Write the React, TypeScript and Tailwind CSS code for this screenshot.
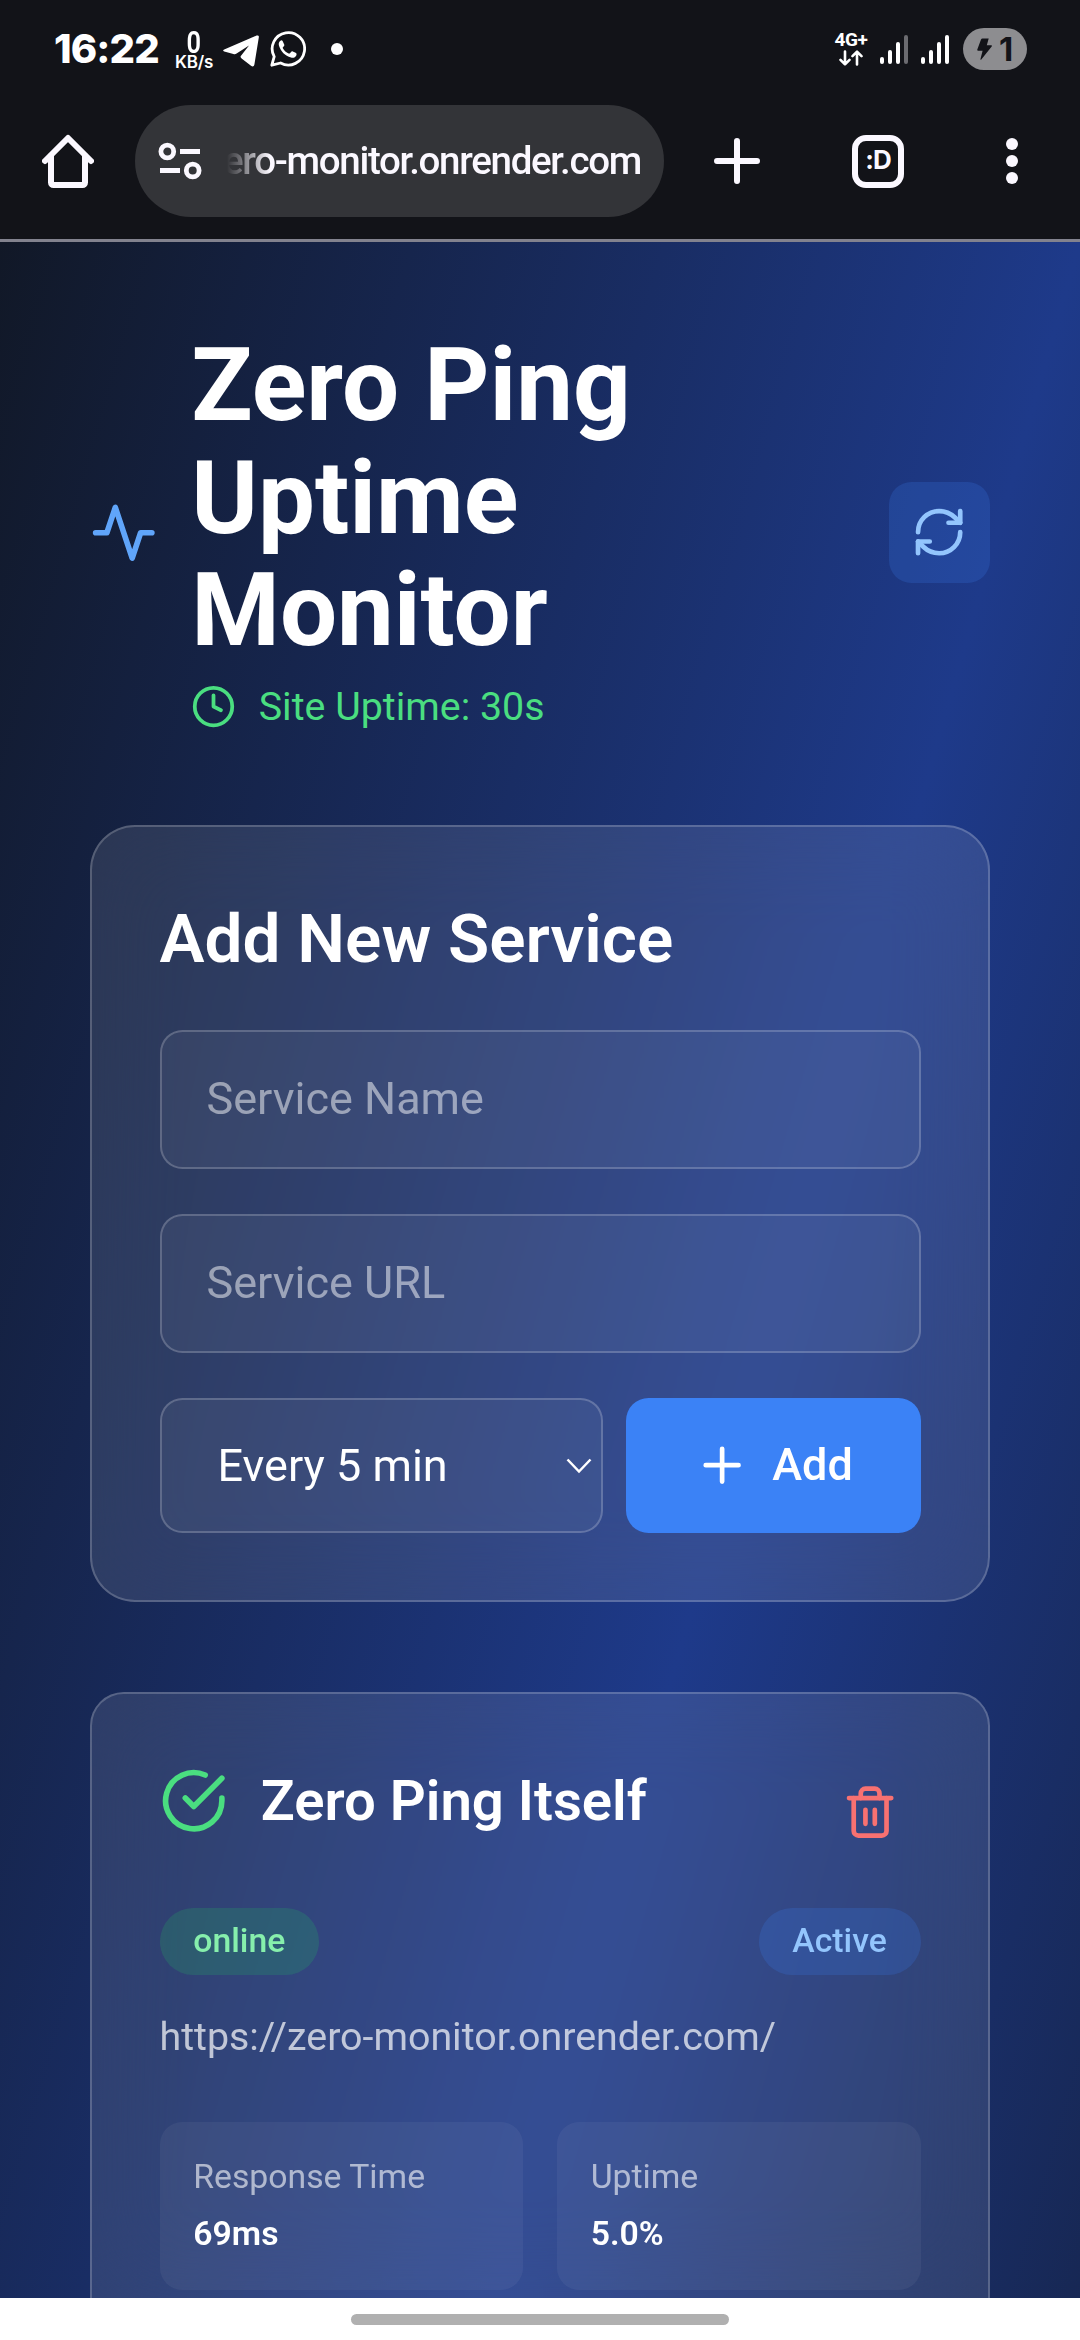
import React from "react";

type IconProps = { className?: string; children: React.ReactNode; strokeWidth?: number };

function Icon({ className = "", children, strokeWidth = 2 }: IconProps) {
  return (
    <svg
      viewBox="0 0 24 24"
      fill="none"
      stroke="currentColor"
      strokeWidth={strokeWidth}
      strokeLinecap="round"
      strokeLinejoin="round"
      className={`shrink-0 ${className}`}
    >
      {children}
    </svg>
  );
}

function SignalBars({ weak = false }: { weak?: boolean }) {
  return (
    <div className="flex h-[29px] items-end gap-[4px]">
      <span className="h-[7px] w-[4px] rounded-full bg-white" />
      <span className="h-[14px] w-[4px] rounded-full bg-white" />
      <span className="h-[22px] w-[4px] rounded-full bg-white" />
      <span className={`h-[29px] w-[4px] rounded-full ${weak ? "bg-[#6b6b70]" : "bg-white"}`} />
    </div>
  );
}

function StatusBar() {
  return (
    <div className="flex h-[98px] items-center justify-between pr-[53px] pl-[54px] text-white">
      <div className="flex items-center">
        <span className="w-[107px] font-['Inter'] text-[40px] leading-[44px] font-extrabold tracking-[-0.9px] whitespace-nowrap">
          16:22
        </span>
        <div className="ml-[13px] flex w-[40px] flex-col items-center">
          <span className="origin-center scale-x-[0.82] font-['Roboto'] text-[31px] leading-[25px] font-semibold">0</span>
          <span className="font-['Inter'] text-[17px] leading-[14px] font-semibold tracking-[-0.2px]">KB/s</span>
        </div>
        <svg viewBox="0 0 36 32" className="mt-[4px] ml-[9px] h-[32px] w-[36px]" fill="currentColor">
          <path d="M1.2 14.6 33.6.6c1.6-.6 2.6.2 2.2 2L31.4 29.6c-.4 2-1.8 2.4-3.4 1.2l-9.4-7.2c-1.4-1.2-1.4-2.2-.2-3.4L26 10.6 13.600 18.6c-1 .6-2 .8-3.2.4L1.2 16.4c-1.4-.4-1.4-1.2 0-1.8Z" />
        </svg>
        <svg viewBox="0 0 36 36" className="ml-[11px] h-[36px] w-[36px]" fill="none">
          <path
            d="M1.8 34.2 4.2 25.6A16.2 16.2 0 1 1 10.6 32Z"
            stroke="currentColor"
            strokeWidth="2.8"
            strokeLinejoin="round"
          />
          <path
            d="M12.6 10c-.6-1-1.4-.8-2.2-.2-1.6 1.2-2 3-1.4 5 1.8 5.8 6 10 12 11.8 2.4.6 4.6-.4 5.4-2.4.4-1.2.2-1.8-.8-2.4l-2.8-1.4c-.8-.4-1.2-.2-1.8.6l-1 1.2c-.4.4-.8.4-1.4.2-2.4-1-4.4-2.8-5.6-5-.4-.6-.2-1 .2-1.4l1-1.2c.2-.4.2-.8 0-1.2Z"
            fill="currentColor"
          />
        </svg>
        <span className="ml-[25px] size-[12px] rounded-full bg-white" />
      </div>
      <div className="flex items-center">
        <div className="flex w-[34px] flex-col items-center gap-[2px]">
          <span className="font-['Roboto'] text-[19px] leading-[16px] font-bold tracking-[-0.4px]">4G+</span>
          <svg viewBox="0 0 24 16" className="h-[16px] w-[24px]" fill="none" stroke="currentColor" strokeWidth="2.6" strokeLinecap="round" strokeLinejoin="round">
            <path d="M6 1.5v12.8M1.5 9.8 6 14.3l4.5-4.5M18 14.5V1.7M13.5 6.2 18 1.7l4.5 4.5" />
          </svg>
        </div>
        <div className="ml-[12px]">
          <SignalBars weak />
        </div>
        <div className="ml-[13px]">
          <SignalBars />
        </div>
        <div className="ml-[14px] flex h-[42px] w-[64px] items-center justify-center gap-[7px] rounded-full bg-[#8d8d90] text-[#121318]">
          <svg viewBox="0 0 15 22" className="h-[22px] w-[15px]" fill="currentColor">
            <path d="M5.5.5h6.2L9.8 7.2h4.4c.8 0 1 .6.5 1.2L4.3 21.5c-.5.6-1 .3-.8-.4L5.6 12.8H1.2c-.8 0-1.1-.5-.9-1.2L4 1.5c.3-.7.8-1 1.5-1Z" />
          </svg>
          <span className="font-['Inter'] text-[33px] leading-[42px] font-bold">1</span>
        </div>
      </div>
    </div>
  );
}

function BrowserBar() {
  return (
    <div className="flex h-[141px] items-start pt-[7px] text-[#fbf8ff]">
      <div className="ml-[42px] flex h-[112px] items-center">
        <svg viewBox="0 0 52 54" className="h-[54px] w-[52px]" fill="none" stroke="currentColor" strokeWidth="6" strokeLinejoin="round" strokeLinecap="round">
          <path d="M3 27 26 4l23 23" />
          <path d="M9 22v26.5a2.5 2.5 0 0 0 2.5 2.5h29a2.5 2.5 0 0 0 2.5-2.5V22" />
        </svg>
      </div>
      <div className="ml-[41px] flex h-[112px] w-[529px] items-center rounded-full bg-[#333438]">
        <svg viewBox="0 0 44 38" className="ml-[23px] h-[38px] w-[44px]" fill="none" stroke="currentColor" strokeWidth="4.8">
          <circle cx="9.3" cy="9.5" r="6.4" />
          <path d="M22 9.5h20M2 28.5h20" />
          <circle cx="34.7" cy="28.5" r="6.4" />
        </svg>
        <div className="ml-[20px] flex w-[419px] justify-end font-['Roboto'] text-[38.5px] leading-[50px] font-medium tracking-[-1.3px] whitespace-nowrap [mask-image:linear-gradient(to_right,transparent_5px,black_48px)]">
          ero-monitor.onrender.com
        </div>
      </div>
      <div className="ml-[50px] flex h-[112px] items-center">
        <svg viewBox="0 0 46 46" className="size-[46px]" stroke="currentColor" strokeWidth="6" strokeLinecap="round">
          <path d="M23 3v40M3 23h40" />
        </svg>
      </div>
      <div className="ml-[92px] flex h-[112px] items-center">
        <div className="flex h-[53px] w-[52px] items-center justify-center rounded-[14px] border-[6px] border-[#fbf8ff] pb-[2px] font-['Inter'] text-[26px] leading-[30px] font-bold tracking-[-1px]">
          :D
        </div>
      </div>
      <div className="ml-[102px] flex h-[112px] flex-col items-center justify-center gap-[5px]">
        <span className="size-[12px] rounded-full bg-[#fbf8ff]" />
        <span className="size-[12px] rounded-full bg-[#fbf8ff]" />
        <span className="size-[12px] rounded-full bg-[#fbf8ff]" />
      </div>
    </div>
  );
}

function Header() {
  return (
    <header className="flex items-center justify-between">
      <div className="flex items-center gap-[33.75px]">
        <Icon className="size-[67.5px] text-[#60a5fa]">
          <polyline points="22 12 18 12 15 21 9 3 6 12 2 12" />
        </Icon>
        <div>
          <h1 className="w-[480px] text-[101.25px] leading-[112.5px] font-bold text-white">Zero Ping Uptime Monitor</h1>
          <div className="mt-[11.25px] flex items-center gap-[22.5px] text-[#4ade80]">
            <Icon className="size-[45px]">
              <circle cx="12" cy="12" r="10" />
              <polyline points="12 6 12 12 16 14" />
            </Icon>
            <span className="text-[39.375px] leading-[56.25px]">Site Uptime: 30s</span>
          </div>
        </div>
      </div>
      <button className="flex size-[101.25px] items-center justify-center rounded-[22.5px] bg-[#3b82f6]/20 text-[#93c5fd]">
        <Icon className="size-[56.25px]">
          <path d="M3 12a9 9 0 0 1 9-9 9.75 9.75 0 0 1 6.74 2.74L21 8" />
          <path d="M21 3v5h-5" />
          <path d="M21 12a9 9 0 0 1-9 9 9.75 9.75 0 0 1-6.74-2.74L3 16" />
          <path d="M8 16H3v5" />
        </Icon>
      </button>
    </header>
  );
}

const field =
  "block w-full rounded-[22.5px] border-2 border-white/20 bg-white/5 px-[45px] pt-[32.75px] pb-[34.75px] text-[45px] leading-[67.5px] text-white outline-none placeholder:text-white/50";

function AddService() {
  return (
    <section className="mt-[90px] rounded-[45px] border-2 border-white/20 bg-white/10 p-[67.5px] backdrop-blur-[45px]">
      <h2 className="-mt-px mb-[46px] text-[67.5px] leading-[90px] font-semibold text-white">Add New Service</h2>
      <div className="flex flex-col gap-[45px]">
        <input className={`${field} h-[139px]`} placeholder="Service Name" />
        <input className={`${field} h-[139px]`} placeholder="Service URL" />
        <div className="flex gap-[22.5px]">
          <button className="flex h-[135px] flex-1 items-center justify-between rounded-[22.5px] border-2 border-white/20 bg-white/5 pt-px pr-[9px] pl-[56px] text-[45px] text-white">
            <span>Every 5 min</span>
            <svg viewBox="0 0 26 16" className="h-[16px] w-[26px]" fill="none" stroke="currentColor" strokeWidth="2.5">
              <path d="M1.5 1.5 13 13.5l11.5-12" />
            </svg>
          </button>
          <button className="flex h-[135px] w-[295px] items-center gap-[22.5px] rounded-[22.5px] bg-[#3b82f6] pl-[68px] text-[45px] font-medium text-white">
            <Icon className="size-[56.25px]">
              <path d="M5 12h14M12 5v14" />
            </Icon>
            Add
          </button>
        </div>
      </div>
    </section>
  );
}

function Stat({ label, value }: { label: string; value: string }) {
  return (
    <div className="rounded-[22.5px] bg-white/5 px-[33.75px] pt-[32.75px] pb-[34.75px] text-[33.75px] leading-[45px]">
      <div className="mb-[11.25px] text-white/60">{label}</div>
      <div className="font-semibold text-white">{value}</div>
    </div>
  );
}

function ServiceCard() {
  return (
    <section className="mt-[90px] rounded-[33.75px] border-2 border-white/20 bg-white/10 p-[67.5px] backdrop-blur-[45px]">
      <div className="flex items-start justify-between">
        <div className="flex items-center gap-[33.75px]">
          <Icon className="size-[67.5px] text-[#4ade80]">
            <path d="M22 11.08V12a10 10 0 1 1-5.93-9.14" />
            <polyline points="22 4 12 14.01 9 11.01" />
          </Icon>
          <h3 className="text-[56.25px] leading-[78.75px] font-semibold text-white">Zero Ping Itself</h3>
        </div>
        <button className="p-[22.5px] text-[#f87171]">
          <Icon className="size-[56.25px]">
            <path d="M3 6h18" />
            <path d="M19 6v14a2 2 0 0 1-2 2H7a2 2 0 0 1-2-2V6m3 0V4a2 2 0 0 1 2-2h4a2 2 0 0 1 2 2v2" />
            <path d="M10 11v6M14 11v6" />
          </Icon>
        </button>
      </div>
      <div className="mt-[45px] flex items-center justify-between text-[33.75px] leading-[45px] font-medium">
        <span className="rounded-full bg-[#22c55e]/20 px-[33.75px] pt-[10.25px] pb-[12.25px] text-[#86efac]">online</span>
        <span className="rounded-full bg-[#3b82f6]/20 px-[33.75px] pt-[10.25px] pb-[12.25px] text-[#93c5fd]">Active</span>
      </div>
      <p className="mt-[33.75px] text-[39.375px] leading-[56.25px] text-white/70">https://zero-monitor.onrender.com/</p>
      <div className="mt-[56.25px] grid grid-cols-2 gap-[33.75px]">
        <Stat label="Response Time" value="69ms" />
        <Stat label="Uptime" value="5.0%" />
      </div>
    </section>
  );
}

export default function App() {
  return (
    <div className="flex h-[2340px] w-[1080px] flex-col overflow-hidden bg-[#121318] font-['Roboto',sans-serif]">
      <StatusBar />
      <BrowserBar />
      <div className="h-[3px] shrink-0 bg-[#82828e]" />
      <main className="min-h-0 flex-1 overflow-hidden">
        <div className="h-[3800px] bg-[linear-gradient(to_bottom_right,#111827,#1e3a8a,#111827)] px-[90px] pt-[88px]">
          <Header />
          <AddService />
          <ServiceCard />
        </div>
      </main>
      <div className="flex h-[42px] shrink-0 justify-center bg-white pt-[16px]">
        <span className="h-[11px] w-[378px] rounded-full bg-[#b0b0b0]" />
      </div>
    </div>
  );
}
